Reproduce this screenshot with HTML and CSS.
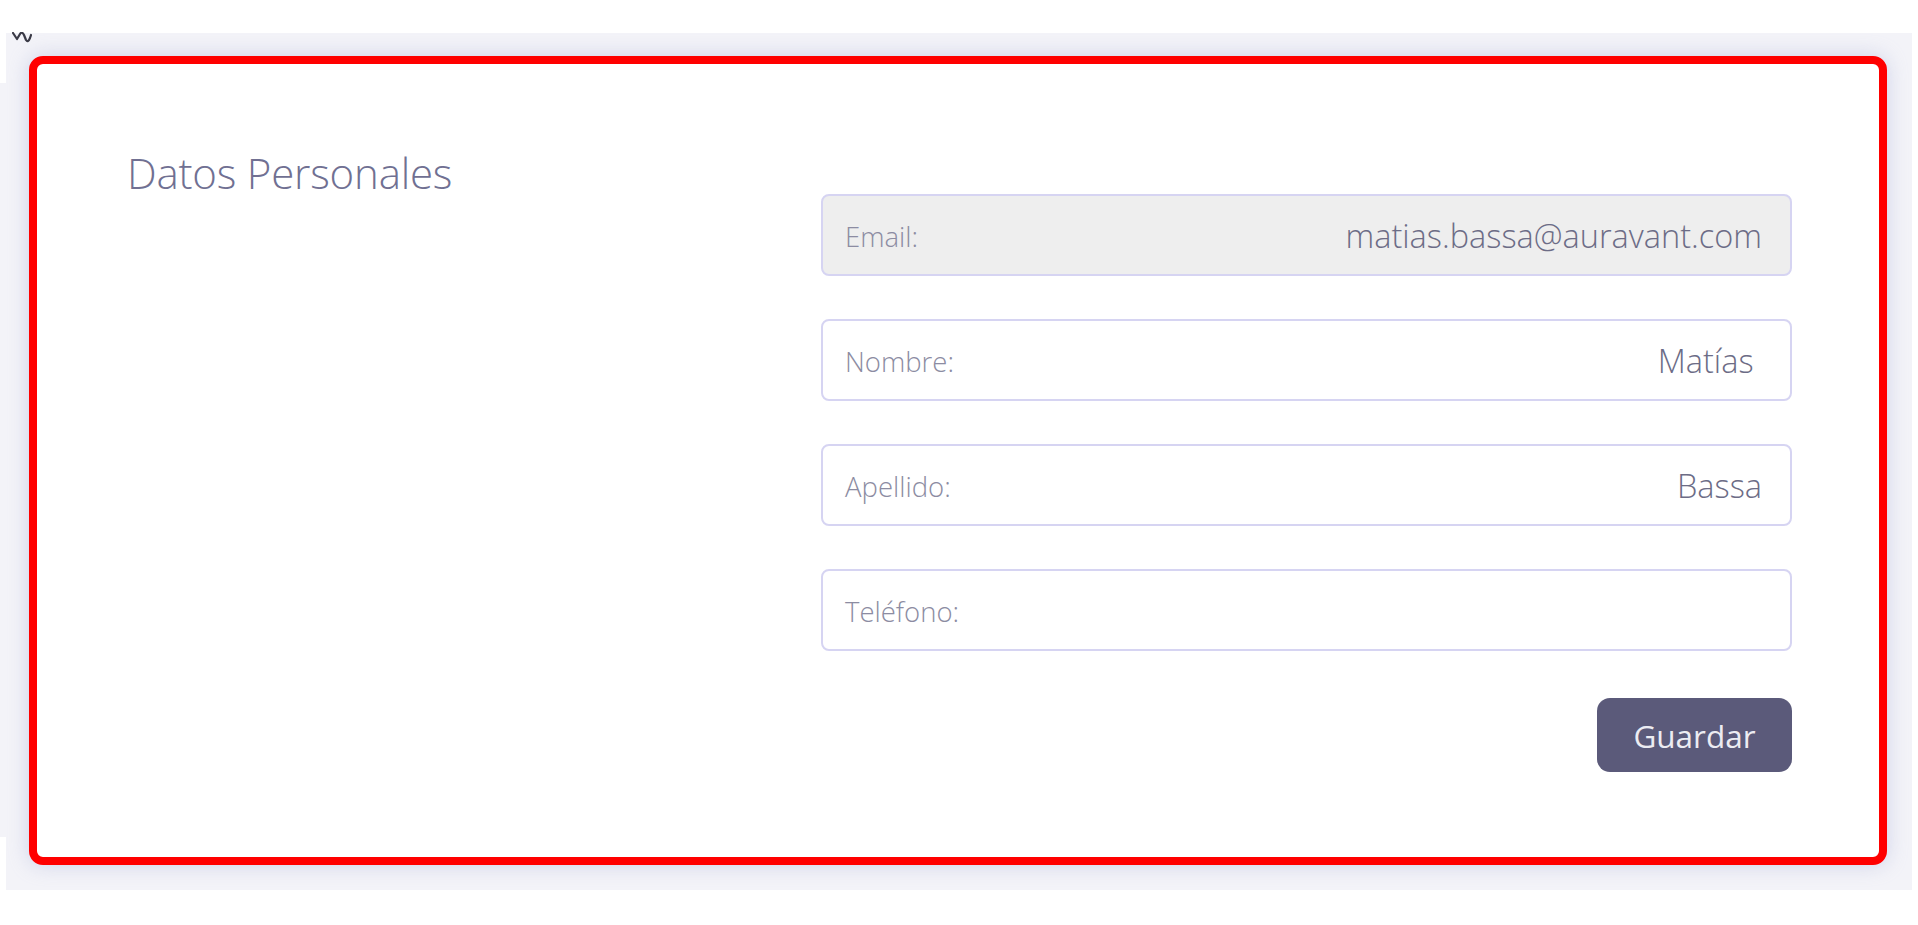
FILE: index.html
```html
<!DOCTYPE html>
<html lang="es">
<head>
  <meta charset="UTF-8">
  <title>Datos Personales</title>
  <link rel="stylesheet" href="styles.css">
</head>
<body>
  <svg class="corner-mark" width="20" height="11" viewBox="0 0 20 11">
    <path d="M1 1 L5 7 L8 2 Q10 -1 12 3 L14 8 Q16 11 18 6 L19 3" fill="none" stroke="#3a3a46" stroke-width="2.2" stroke-linecap="round" stroke-linejoin="round"/>
  </svg>

  <div class="page">
    <div class="edge"></div>
    <div class="card">
      <div class="side">
        <h2>Datos Personales</h2>
      </div>

      <form class="form" onsubmit="return false">
        <label class="field readonly">
          <span class="field-label">Email:</span>
          <input type="text" value="matias.bassa@auravant.com" readonly>
        </label>
        <label class="field">
          <span class="field-label">Nombre:</span>
          <input type="text" value="Matías ">
        </label>
        <label class="field">
          <span class="field-label">Apellido:</span>
          <input type="text" value="Bassa">
        </label>
        <label class="field">
          <span class="field-label">Teléfono:</span>
          <input type="text" value="">
        </label>

        <div class="actions">
          <button type="submit">Guardar</button>
        </div>
      </form>
    </div>
  </div>
</body>
</html>
```

FILE: styles.css
```css
body { margin: 0; background: #ffffff; font-family: "Open Sans", "Noto Sans", sans-serif; }

.corner-mark { position: absolute; left: 12px; top: 32px; z-index: 2; }

.page { position: relative; margin: 33px 6px 35px 6px; padding: 23px 25px 25px 23px; background: #f3f3f8; }
.edge { position: absolute; left: -6px; top: 50px; bottom: 53px; width: 6px; background: #f3f3f8; }

.card {
  display: grid;
  grid-template-columns: 1fr 971px;
  padding: 0 87px 85px 90px;
  background: #ffffff;
  border: 8px solid #ff0000;
  border-radius: 14px;
  box-shadow: 0 0 20px rgba(165, 170, 215, 0.45);
}

.side { padding-top: 85px; }
h2 { margin: 0; font-size: 42px; line-height: 48px; font-weight: 300; color: #707092; letter-spacing: -0.2px; }

.form { padding-top: 130px; display: flex; flex-direction: column; gap: 43px; }

.field {
  display: flex;
  align-items: center;
  height: 82px;
  box-sizing: border-box;
  padding: 0 28px 0 22px;
  border: 2px solid #d6d4f2;
  border-radius: 8px;
  background: #ffffff;
}
.field.readonly { background: #eeeeee; }
.field-label { padding-top: 3px; font-size: 27.5px; font-weight: 300; color: #8c8ca2; white-space: nowrap; }
.field input {
  flex: 1;
  min-width: 0;
  border: none;
  outline: none;
  background: transparent;
  text-align: right;
  font-family: inherit;
  font-size: 32.5px;
  font-weight: 300;
  color: #6c6c86;
  padding: 0;
}

.actions { display: flex; justify-content: flex-end; margin-top: 4px; }
button {
  width: 195px;
  height: 74px;
  border: none;
  border-radius: 13px;
  background: #5b5a7a;
  color: #ececf2;
  font-family: inherit;
  font-size: 31.5px;
  cursor: pointer;
}
```
